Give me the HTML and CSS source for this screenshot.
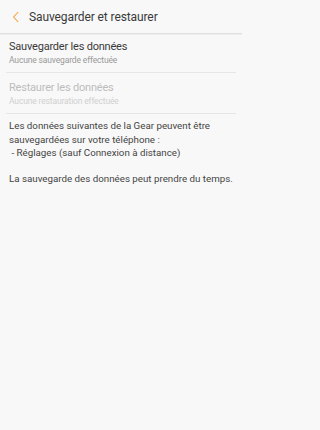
FILE: index.html
```html
<!DOCTYPE html>
<html lang="fr">
<head>
<meta charset="utf-8">
<title>Sauvegarder et restaurer</title>
<link rel="stylesheet" href="styles.css">
</head>
<body>
<div class="screen">
  <header class="appbar">
    <span class="back" aria-label="Retour">
      <svg width="8" height="12" viewBox="0 0 8 12"><path d="M6.2 1 L1.6 6 L6.2 11" fill="none" stroke="#f2a444" stroke-width="1.1"/></svg>
    </span>
    <h1 class="title">Sauvegarder et restaurer</h1>
  </header>
  <div class="list">
    <div class="item">
      <div class="item-title">Sauvegarder les données</div>
      <div class="item-sub">Aucune sauvegarde effectuée</div>
    </div>
    <div class="item disabled">
      <div class="item-title">Restaurer les données</div>
      <div class="item-sub">Aucune restauration effectuée</div>
    </div>
  </div>
  <div class="info">
    <p>Les données suivantes de la Gear peuvent être sauvegardées sur votre téléphone :<br>&nbsp;- Réglages (sauf Connexion à distance)</p>
    <p>La sauvegarde des données peut prendre du temps.</p>
  </div>
</div>
</body>
</html>
```
FILE: styles.css
```css
html, body {
  margin: 0;
  padding: 0;
  background: #f8f8f8;
}
body {
  font-family: Roboto, "Noto Sans", sans-serif;
  color: #333;
}
.screen {
  width: 242px;
  min-height: 430px;
  background: #f8f8f8;
}
.appbar {
  display: flex;
  align-items: center;
  height: 33px;
  border-bottom: 1px solid #e0e0e0;
  box-shadow: 0 1px 0 #ededed;
}
.back {
  display: flex;
  width: 29px;
  justify-content: center;
  padding-left: 2px;
  box-sizing: border-box;
}
.title {
  margin: 0;
  font-size: 12px;
  letter-spacing: -0.1px;
  font-weight: 400;
  color: #3a3a3a;
}
.list {
  padding: 0 6px;
}
.item {
  padding: 7px 3px 6px;
  border-bottom: 1px solid #e6e6e6;
}
.item:first-child {
  padding-top: 5px;
}
.item-title {
  font-size: 11px;
  letter-spacing: -0.2px;
  line-height: 16px;
  color: #3a3a3a;
}
.item-sub {
  font-size: 8.5px;
  letter-spacing: -0.15px;
  line-height: 11px;
  color: #9a9a9a;
}
.disabled .item-title { color: #bdbdbd; }
.disabled .item-sub { color: #d0d0d0; }
.info {
  padding: 5px 9px;
  font-size: 9.75px;
  line-height: 13.7px;
  color: #444;
}
.info p {
  margin: 0 0 11.6px;
}
```
